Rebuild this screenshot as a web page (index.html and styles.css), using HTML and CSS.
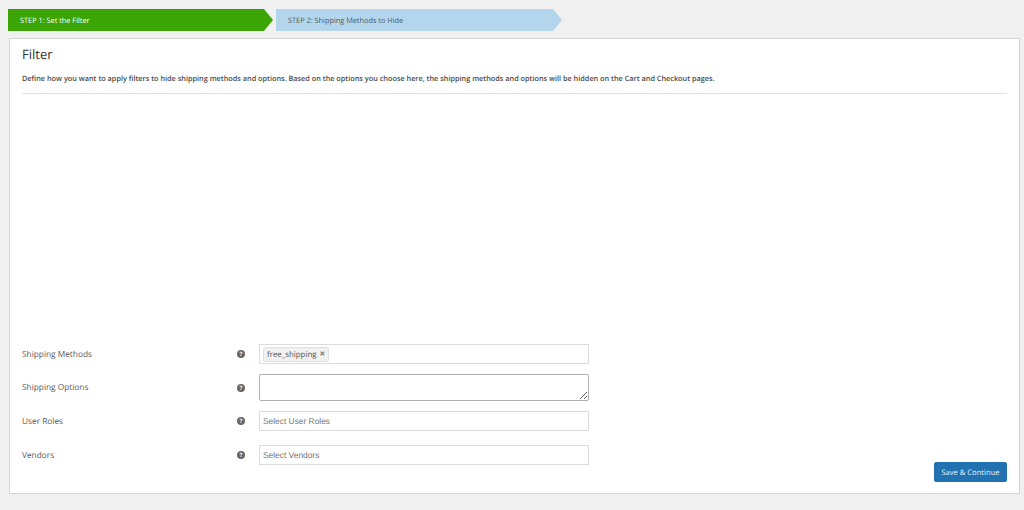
FILE: index.html
```html
<!DOCTYPE html>
<html lang="en">
<head>
    <meta charset="UTF-8">
    <meta name="viewport" content="width=device-width, initial-scale=1.0">
    <title>Filter</title>
    <link rel="stylesheet" href="styles.css">
</head>
<body>
    <div class="steps">
        <div class="step step-active">STEP 1: Set the Filter</div>
        <div class="step step-next">STEP 2: Shipping Methods to Hide</div>
    </div>

    <div class="panel">
        <h2 class="panel-title">Filter</h2>
        <p class="panel-desc">Define how you want to apply filters to hide shipping methods and options. Based on the options you choose here, the shipping methods and options will be hidden on the Cart and Checkout pages.</p>
        <hr class="panel-line">

        <div class="panel-body">
            <div class="rows">
                <div class="row">
                    <label class="row-label">Shipping Methods</label>
                    <span class="help">?</span>
                    <div class="field">
                        <span class="tag">free_shipping <span class="tag-x">×</span></span>
                    </div>
                </div>
                <div class="row row-area">
                    <label class="row-label">Shipping Options</label>
                    <span class="help">?</span>
                    <textarea class="area"></textarea>
                </div>
                <div class="row row-roles">
                    <label class="row-label">User Roles</label>
                    <span class="help">?</span>
                    <div class="field field-empty">Select User Roles</div>
                </div>
                <div class="row">
                    <label class="row-label">Vendors</label>
                    <span class="help">?</span>
                    <div class="field field-empty">Select Vendors</div>
                </div>
            </div>
            <button class="save-btn">Save &amp; Continue</button>
        </div>
    </div>
</body>
</html>
```

FILE: styles.css
```css
* {
    margin: 0;
    padding: 0;
    box-sizing: border-box;
}

body {
    font-family: 'Open Sans', 'Noto Sans', sans-serif;
    text-rendering: geometricPrecision;
    background: #f0f0f1;
    color: #444444;
    padding: 9px 4px 0 8px;
    height: 510px;
    overflow: hidden;
}

.steps {
    display: flex;
    gap: 3px;
    height: 22px;
    margin-bottom: 7px;
}

.step {
    font-size: 7.35px;
    line-height: 24px;
    padding-left: 12px;
    clip-path: polygon(0 0, calc(100% - 9px) 0, 100% 50%, calc(100% - 9px) 100%, 0 100%);
}

.step-active {
    width: 265px;
    background: #3aa504;
    color: #ffffff;
}

.step-next {
    width: 286px;
    background: #b4d6ec;
    color: #4a5a66;
}

.panel {
    margin-left: 1px;
    width: 1011px;
    height: 456px;
    background: #ffffff;
    border: 1px solid #d5d5d5;
    padding: 0 12px 11px;
    display: flex;
    flex-direction: column;
}

.panel-title {
    font-size: 13px;
    font-weight: 400;
    line-height: 18px;
    color: #333333;
    margin-top: 6px;
}

.panel-desc {
    font-size: 7.3px;
    font-weight: 600;
    line-height: 12px;
    color: #4a4a4a;
    margin-top: 10px;
}

.panel-line {
    border: none;
    border-top: 1px solid #e2e2e2;
    margin-top: 8px;
}

.panel-body {
    flex: 1;
    display: grid;
    grid-template-columns: 1fr auto;
    align-items: end;
}

.rows {
    display: flex;
    flex-direction: column;
    gap: 10px;
    padding-bottom: 17px;
}

.row {
    display: flex;
    align-items: center;
    height: 20px;
}

.row-area {
    height: 27px;
}

.row-roles {
    margin-bottom: 4px;
}

.row-label {
    width: 215px;
    font-size: 8.3px;
    color: #5a5a5a;
}

.help {
    width: 8px;
    height: 8px;
    border-radius: 50%;
    background: #666666;
    color: #ffffff;
    font-size: 6px;
    font-weight: 700;
    line-height: 8px;
    text-align: center;
    margin-right: 14px;
}

.field {
    width: 330px;
    height: 20px;
    border: 1px solid #dcdcdc;
    display: flex;
    align-items: center;
    padding-left: 3px;
}

.field-empty {
    font-family: 'Liberation Sans', Arial, sans-serif;
    font-size: 8.4px;
    color: #777777;
}

.tag {
    font-size: 7.9px;
    line-height: 12px;
    color: #555555;
    background: #f1f1f1;
    border: 1px solid #e0e0e0;
    border-radius: 2px;
    padding: 1px 3px 0;
    margin-top: 1px;
}

.tag-x {
    font-size: 10px;
    line-height: 9px;
    font-weight: 700;
    color: #777777;
    margin-left: 1px;
}

.area {
    width: 330px;
    height: 27px;
    border: 1px solid #b0b0b0;
    border-radius: 2px;
    background: #ffffff;
}

.save-btn {
    font-family: 'Open Sans', sans-serif;
    text-rendering: geometricPrecision;
    font-size: 7.6px;
    color: #e8f2fa;
    background: #2271b1;
    border: 1px solid #2271b1;
    border-radius: 2px;
    width: 73px;
    height: 20px;
    padding-top: 1px;
}
```
